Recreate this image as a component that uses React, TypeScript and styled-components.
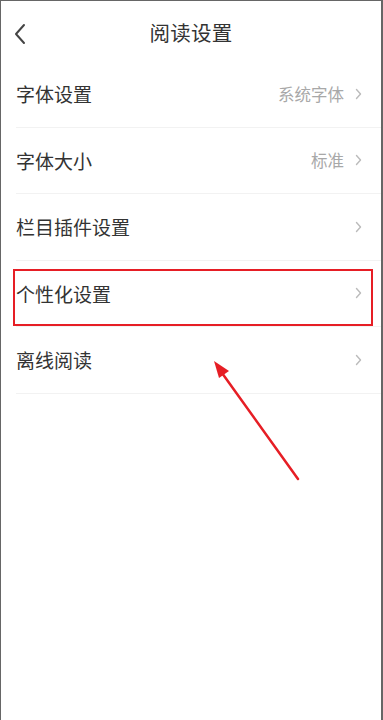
import React from 'react';
import styled, { createGlobalStyle } from 'styled-components';

const GlobalStyle = createGlobalStyle`
  html, body {
    margin: 0;
    padding: 0;
    background: #ffffff;
  }
  * {
    box-sizing: border-box;
  }
`;

type Item = {
  label: string;
  value?: string;
  highlighted?: boolean;
};

const items: Item[] = [
  { label: '字体设置', value: '系统字体' },
  { label: '字体大小', value: '标准' },
  { label: '栏目插件设置' },
  { label: '个性化设置', highlighted: true },
  { label: '离线阅读' },
];

const ReadingSettingsPage = (): JSX.Element => {
  return (
    <Screen>
      <GlobalStyle />
      <Header>
        <BackButton aria-label="返回">
          <svg width="14" height="22" viewBox="0 0 14 22" fill="none">
            <path
              d="M11 2 L3 11 L11 20"
              stroke="#444"
              strokeWidth="2"
              strokeLinecap="round"
              strokeLinejoin="round"
            />
          </svg>
        </BackButton>
        <Title>阅读设置</Title>
      </Header>
      <List>
        {items.map((item) => (
          <Row key={item.label} highlighted={item.highlighted}>
            <Label>{item.label}</Label>
            <Trailing>
              {item.value && <Value>{item.value}</Value>}
              <svg width="7" height="12" viewBox="0 0 7 12" fill="none">
                <path
                  d="M1.5 1.5 L5.5 6 L1.5 10.5"
                  stroke="#bbb"
                  strokeWidth="1.4"
                  strokeLinecap="round"
                  strokeLinejoin="round"
                />
              </svg>
            </Trailing>
          </Row>
        ))}
      </List>
      <Arrow width="383" height="720" viewBox="0 0 383 720">
        <line
          x1="298"
          y1="479"
          x2="222"
          y2="373"
          stroke="#e61e25"
          strokeWidth="2.5"
          strokeLinecap="round"
        />
        <polygon points="214,361 229,371 219,378" fill="#e61e25" />
      </Arrow>
    </Screen>
  );
};

const Screen = styled.div`
  position: relative;
  width: 383px;
  height: 720px;
  background: #ffffff;
  border-top: 1px solid #666;
  border-left: 1px solid #666;
  border-right: 2px solid #666;
  overflow: hidden;
  font-family: 'Noto Sans CJK SC', 'Noto Sans', sans-serif;
`;

const Header = styled.div`
  position: relative;
  height: 60px;
  display: flex;
  align-items: center;
  justify-content: center;
`;

const BackButton = styled.div`
  position: absolute;
  left: 12px;
  top: 22px;
  display: flex;
`;

const Title = styled.div`
  font-size: 20.5px;
  color: #333;
  letter-spacing: 0.3px;
  margin-top: 2px;
`;

const List = styled.div`
  display: flex;
  flex-direction: column;
`;

const Row = styled.div<{ highlighted?: boolean }>`
  position: relative;
  height: 66.5px;
  margin-left: 15px;
  padding-right: 19px;
  display: flex;
  align-items: center;
  justify-content: space-between;
  border-bottom: 1px solid #f2f2f2;

  ${({ highlighted }) =>
    highlighted &&
    `
    &::after {
      content: '';
      position: absolute;
      left: -3px;
      right: 8px;
      top: 8px;
      bottom: 0px;
      border: 2px solid #e61e25;
    }
  `}
`;

const Label = styled.div`
  font-size: 19px;
  color: #333;
`;

const Trailing = styled.div`
  display: flex;
  align-items: center;
  gap: 11px;
`;

const Value = styled.div`
  font-size: 16.5px;
  color: #a8a8a8;
`;

const Arrow = styled.svg`
  position: absolute;
  left: -1px;
  top: -1px;
  pointer-events: none;
`;

export default ReadingSettingsPage;
